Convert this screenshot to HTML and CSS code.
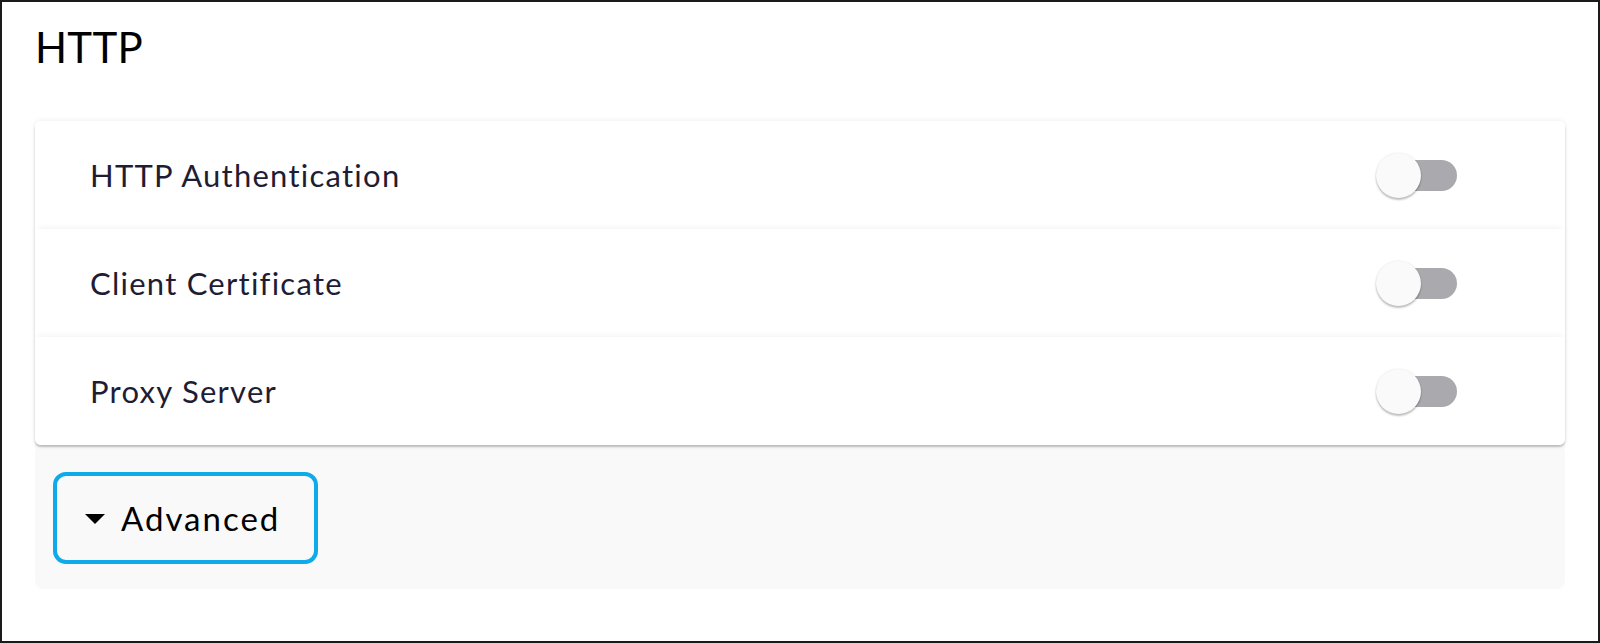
FILE: index.html
```html
<!DOCTYPE html>
<html lang="en">
<head>
<meta charset="utf-8">
<title>HTTP</title>
<link rel="stylesheet" href="styles.css">
</head>
<body>
<div class="frame">
  <h1 class="title">HTTP</h1>
  <div class="panel">
    <div class="card">
      <div class="row">
        <span class="label">HTTP Authentication</span>
        <span class="switch"><span class="track"></span><span class="thumb"></span></span>
      </div>
      <div class="row">
        <span class="label">Client Certificate</span>
        <span class="switch"><span class="track"></span><span class="thumb"></span></span>
      </div>
      <div class="row">
        <span class="label">Proxy Server</span>
        <span class="switch"><span class="track"></span><span class="thumb"></span></span>
      </div>
    </div>
    <div class="advanced-wrap">
      <button class="advanced" type="button"><span class="caret"></span><span>Advanced</span></button>
    </div>
  </div>
</div>
</body>
</html>
```

FILE: styles.css
```css
* { box-sizing: border-box; }
html, body { margin: 0; padding: 0; background: #fff; }
body { font-family: "Lato", "Noto Sans", sans-serif; }

.frame {
  width: 1600px;
  height: 643px;
  border: 2px solid #1a1a1a;
  padding: 24px 33px 0 33px;
}

.title {
  margin: 0 0 52px 0;
  font-size: 42px;
  line-height: 43px;
  font-weight: 400;
  letter-spacing: 0.3px;
  color: #000;
}

.panel {
  background: #f9f9f9;
  border-radius: 8px;
  width: 1530px;
}

.card {
  background: #fff;
  border-radius: 6px;
  box-shadow: 0 2px 2px rgba(0,0,0,0.22), 0 0 6px rgba(0,0,0,0.08);
}

.row {
  height: 108px;
  display: flex;
  align-items: center;
  justify-content: space-between;
  padding: 0 108px 0 55px;
  background: #fff;
  border-radius: 6px;
}
.row + .row {
  border-radius: 0;
  box-shadow: 0 -4px 6px -3px rgba(0,0,0,0.06);
}
.row:last-child { border-radius: 0 0 6px 6px; }

.label {
  font-size: 31px;
  line-height: 1;
  letter-spacing: 1.25px;
  color: #1e1d33;
}

.switch {
  position: relative;
  width: 81px;
  height: 45px;
  display: block;
}
.track {
  position: absolute;
  left: 6px;
  top: 7px;
  width: 75px;
  height: 31px;
  border-radius: 16px;
  background: #aaa9ae;
}
.thumb {
  position: absolute;
  left: 0;
  top: 0;
  width: 45px;
  height: 45px;
  border-radius: 50%;
  background: #fafafa;
  box-shadow: 0 2px 2px rgba(0,0,0,0.24), 0 0 2px rgba(0,0,0,0.12);
}

.advanced-wrap {
  padding: 27px 0 25px 18px;
}
.advanced {
  display: flex;
  align-items: center;
  width: 265px;
  height: 92px;
  border: 4px solid #0eaae9;
  border-radius: 13px;
  background: #f9f9f9;
  padding: 0 0 0 28px;
  font-family: inherit;
  font-size: 33px;
  letter-spacing: 2px;
  color: #000;
  cursor: pointer;
}
.caret {
  width: 0;
  height: 0;
  border-left: 10px solid transparent;
  border-right: 10px solid transparent;
  border-top: 10px solid #000;
  margin-right: 16px;
  margin-top: 2px;
}
```
